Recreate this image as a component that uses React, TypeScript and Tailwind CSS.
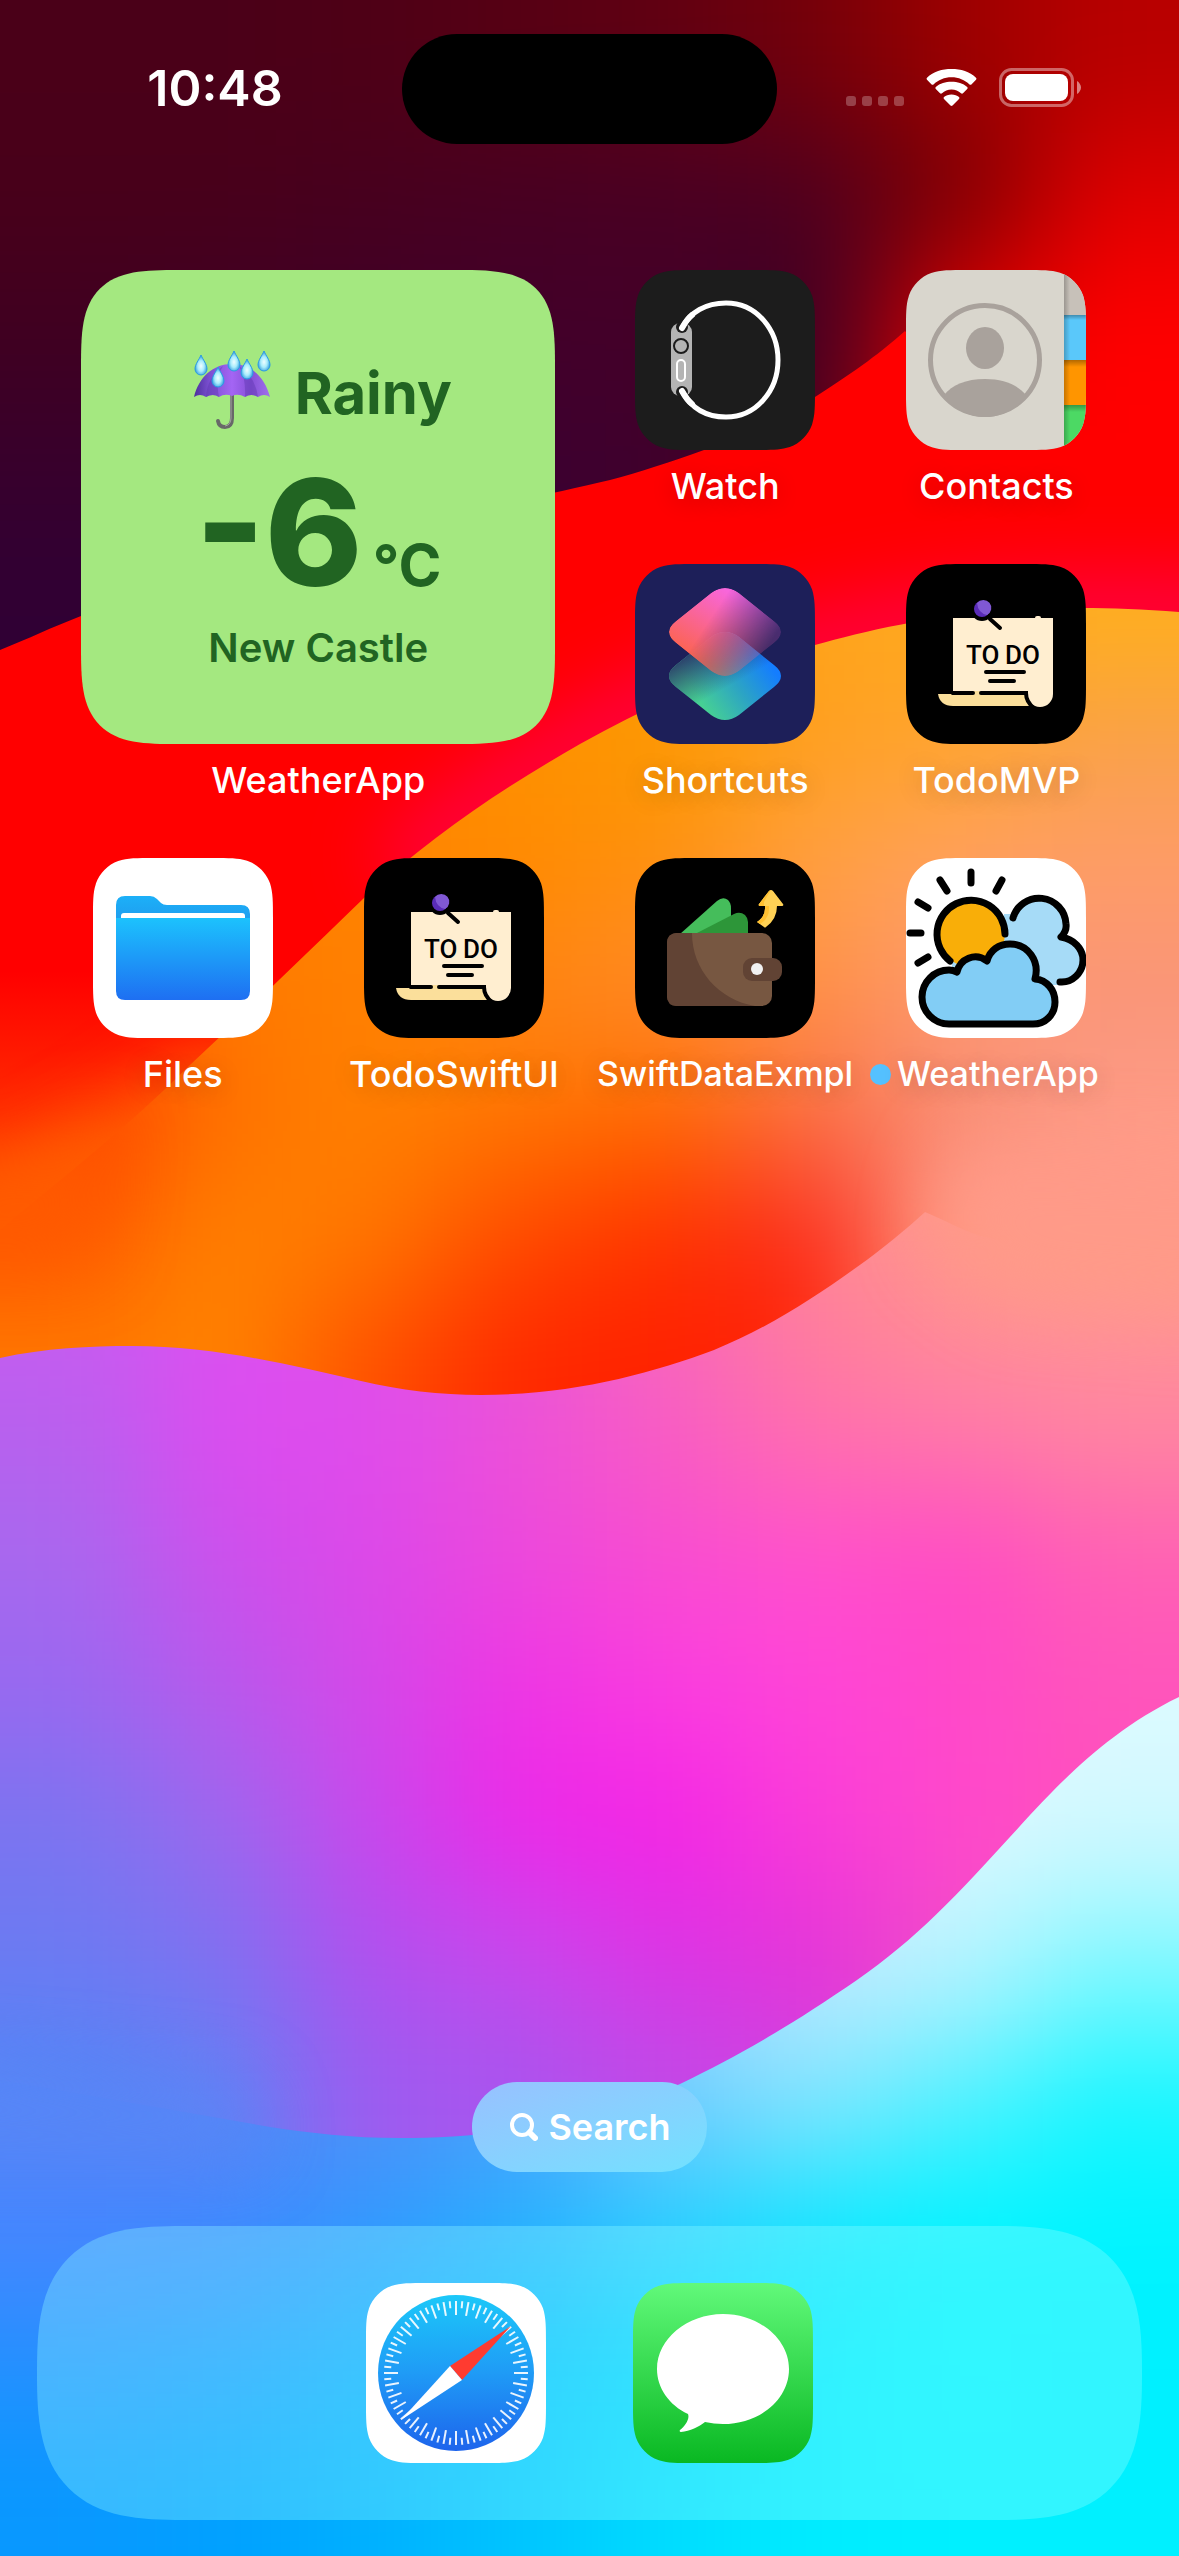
import React from "react";

/* ---------- shared geometry ---------- */

// Rounded square with continuous-curvature corners.
function squircle(w: number, h: number, r: number) {
  const a = 1.528665 * r;
  const b = 1.088493 * r;
  const c = 0.868407 * r;
  const d = 0.66993 * r;
  const e = 0.065496 * r;
  const f = 0.631494 * r;
  const g = 0.074911 * r;
  const i = 0.372824 * r;
  const j = 0.169059 * r;
  return [
    `M${a} 0H${w - a}`,
    `C${w - b} 0 ${w - c} 0 ${w - d} ${e}L${w - f} ${g}`,
    `C${w - i} ${j} ${w - j} ${i} ${w - g} ${f}`,
    `C${w} ${c} ${w} ${b} ${w} ${a}V${h - a}`,
    `C${w} ${h - b} ${w} ${h - c} ${w - e} ${h - d}L${w - g} ${h - f}`,
    `C${w - j} ${h - i} ${w - i} ${h - j} ${w - f} ${h - g}`,
    `C${w - c} ${h} ${w - b} ${h} ${w - a} ${h}H${a}`,
    `C${b} ${h} ${c} ${h} ${d} ${h - e}L${f} ${h - g}`,
    `C${i} ${h - j} ${j} ${h - i} ${g} ${h - f}`,
    `C0 ${h - c} 0 ${h - b} 0 ${h - a}V${a}`,
    `C0 ${b} 0 ${c} ${e} ${d}L${g} ${f}`,
    `C${j} ${i} ${i} ${j} ${f} ${g}`,
    `C${c} 0 ${b} 0 ${a} 0Z`,
  ].join("");
}

const TILE = squircle(180, 180, 40);

/* ---------- wallpaper ---------- */

const COLS = 8;
const COL_W = 1179 / COLS;

// Grid of colours melted together with a blur.
function Mesh({ top, step, rows }: { top: number; step: number; rows: string[] }) {
  const last = rows.length - 1;
  return (
    <g filter="url(#melt)">
      {rows.map((row, r) =>
        row.split(" ").map((color, c) => {
          const x0 = c === 0 ? -400 : c * COL_W;
          const x1 = c === COLS - 1 ? 1579 : (c + 1) * COL_W + 1;
          const y0 = r === 0 ? top - 300 : top + r * step;
          const y1 = r === last ? top + (r + 1) * step + 300 : top + (r + 1) * step + 1;
          return <rect key={`${r}-${c}`} x={x0} y={y0} width={x1 - x0} height={y1 - y0} fill={`#${color}`} />;
        })
      )}
    </g>
  );
}

const NIGHT = [
  "4a0018 4a0018 4e0016 560014 600012 74000a 9c0000 b80000",
  "48001a 48001a 47001e 470022 480024 4c0020 7c0004 e00000",
  "400020 400024 400028 42002a 440028 3c0024 dc0000 ff0000",
  "38002c 38002e 3a0030 3c0030 40002c 48001c ff0000 ff0000",
  "300034 300034 340034 380034 3c0030 48001c ff0000 ff0000",
];
const SUNSET = [
  "ff8000 ff8000 ff8800 ff9000 ff9a08 ffa31a ffaa1e ffae1e",
  "ff8000 ff8000 ff8800 ff9000 fb9800 ff9f20 ffa430 f8a04c",
  "ff7000 ff8000 ff8200 ff8a00 ff9010 ffa044 ffa060 ff9c68",
  "ff5000 ff7800 ff8000 ff8414 ff8828 ff9048 fc9870 f89478",
  "ff3c00 ff7000 ff8000 ff7600 ff6c00 fa7048 f88c76 ff9c88",
  "ff5c00 ff8000 ff7800 ff4a00 ff3200 fb2c20 ff9c84 ff9a88",
  "ff7800 ff8400 ff5000 ff2800 ff2000 ff2408 ff9484 ff9490",
];
const ORCHID = [
  "c85cf0 d850f0 dc50e8 e858d8 f868b8 ff8c90 ff9c86 ff9c8a",
  "c85cf0 dc50f0 dc50e8 e858d8 f868b8 ff8098 ff9290 ff9494",
  "b860ee dc4cf0 e04cec ec50d8 f85cc4 ff70ac ff7aa8 ff86a0",
  "a868ee cc50ec dc48e8 ec48dc f84cd0 ff50cc ff4ac4 ff60b4",
  "9868f0 b858ec d448e8 ee34e4 fa3ce0 ff44d8 ff48c8 ff54bc",
  "7c74f0 9c68ee c848ec ec28e8 f424e6 fa3cd8 ff48cc ff50bc",
  "6c7af2 8070f0 b050ee c848ec dc34e4 e434d8 f04cc8 ff50bc",
  "5484f6 6480f4 9c5cf0 a854ee c04ae8 d040e0 f04cc8 ff50bc",
];
const LAGOON = [
  "5884f6 5884f6 5090f8 60b0fc a0e0ff d0f0ff e4fbff dcfaff",
  "5884f6 5884f6 5090f8 60b0fc a0e0ff c8f0ff d8f8ff ccf8ff",
  "5884f6 5884f6 5090f8 60b0fc 90d8ff bce8ff b4f2ff 78f8ff",
  "5284f8 5884f6 4e90f8 48a0fc 70c8ff 80e4ff 50f0ff 18f6ff",
  "4686ff 4088ff 3298ff 28b0ff 2cccff 10e4ff 00f4ff 00f4ff",
  "2490ff 1c98ff 10a8ff 00bcff 00d4ff 00ecff 00f4ff 00f0ff",
  "0898ff 00a0ff 00b0ff 00c4ff 00dcff 00ecff 00f0ff 00f0ff",
];

const SUNSET_EDGE =
  "C60 1180 130 1125 190 1065C230 1028 310 950 364 898C434 834 500 790 580 744C660 700 730 668 815 645C890 624 1000 598 1179 612";

function Wallpaper() {
  return (
    <svg
      aria-hidden="true"
      className="absolute inset-0 h-full w-full"
      viewBox="0 0 1179 2556"
      preserveAspectRatio="none"
    >
      <defs>
        <filter id="melt" filterUnits="userSpaceOnUse" x="-400" y="-400" width="1979" height="3400" colorInterpolationFilters="sRGB">
          <feGaussianBlur stdDeviation="60" />
        </filter>
        <filter id="glow" filterUnits="userSpaceOnUse" x="-400" y="-400" width="1979" height="3400" colorInterpolationFilters="sRGB">
          <feGaussianBlur stdDeviation="36" />
        </filter>
        <linearGradient id="lava" x1="0" y1="0" x2="0" y2="1">
          <stop offset="0.38" stopColor="#ff0000" />
          <stop offset="0.44" stopColor="#ff3000" />
          <stop offset="0.5" stopColor="#ff6400" />
        </linearGradient>
        <clipPath id="nightClip">
          <path d="M0 0H1179V440H1000L905 331C880 353 860 368 815 397C780 419 750 434 704 450C670 462 640 472 610 480C560 492 480 508 430 520C300 550 150 590 81 616C50 628 30 638 0 650Z" />
        </clipPath>
        <clipPath id="sunsetClip">
          <path d={`M0 1230${SUNSET_EDGE}V1500H0Z`} />
        </clipPath>
        <clipPath id="orchidClip">
          <path d="M0 1358C45 1348 90 1346 132 1346C215 1346 290 1365 361 1381C400 1390 440 1395 481 1395C570 1395 650 1374 714 1350C770 1327 815 1297 857 1267C885 1247 905 1230 925 1212C950 1222 970 1236 1000 1240H1179V2200H0Z" />
        </clipPath>
        <clipPath id="lagoonClip">
          <path d="M1179 1697C1110 1730 1060 1783 1030 1815C960 1892 920 1936 857 1980C790 2026 740 2055 680 2084C580 2128 480 2138 400 2138C350 2138 310 2133 270 2127L0 2080V2556H1179Z" />
        </clipPath>
      </defs>
      <rect width="1179" height="2556" fill="url(#lava)" />
      <path
        d="M400 885C434 854 500 800 580 754C660 710 730 678 815 655C890 634 1000 608 1250 622"
        fill="none"
        stroke="#ff003c"
        strokeWidth="90"
        filter="url(#glow)"
      />
      <path d="M-200 1340L60 1150L180 1070L240 1030V1340Z" fill="#ff6400" filter="url(#glow)" />
      <g clipPath="url(#nightClip)">
        <Mesh top={0} step={132} rows={NIGHT} />
      </g>
      <g clipPath="url(#sunsetClip)">
        <Mesh top={560} step={123} rows={SUNSET} />
      </g>
      <path d="M-120 1170L40 1160L110 1110L90 1260H-120Z" fill="#ff5a00" filter="url(#glow)" />
      <g clipPath="url(#orchidClip)">
        <Mesh top={1100} step={131} rows={ORCHID} />
      </g>
      <path d="M960 1150L1300 1160V1320L1010 1300L930 1240Z" fill="#ff9a88" filter="url(#glow)" />
      <g clipPath="url(#lagoonClip)">
        <Mesh top={1650} step={130} rows={LAGOON} />
      </g>
      <path d="M-100 2060L240 2090L260 2150L-100 2150Z" fill="#5886f6" filter="url(#glow)" />
    </svg>
  );
}

/* ---------- icons ---------- */

function Tile({ id, children }: { id: string; children: React.ReactNode }) {
  return (
    <svg aria-hidden="true" className="size-[180px] shrink-0" viewBox="0 0 180 180">
      <clipPath id={`${id}-tile`}>
        <path d={TILE} />
      </clipPath>
      <g clipPath={`url(#${id}-tile)`}>{children}</g>
    </svg>
  );
}

function WatchIcon() {
  return (
    <Tile id="watch">
      <rect width="180" height="180" fill="#1c1c1c" />
      <rect x="36" y="53" width="21" height="73" rx="9" fill="#b4b4b4" />
      <circle cx="47" cy="57" r="6" fill="#1c1c1c" />
      <circle cx="47" cy="122" r="6" fill="#1c1c1c" />
      <path
        d="M47 58C55 42 71 33 91 33C121 33 143 59 143 90C143 121 121 147 91 147C71 147 56 138 47 121"
        fill="none"
        stroke="#fff"
        strokeWidth="5"
        strokeLinecap="round"
      />
      <path d="M47 58Q52 49 57 45M47 121Q52 130 57 134" fill="none" stroke="#fff" strokeWidth="6" strokeLinecap="round" />
      <circle cx="46" cy="76" r="7" fill="#b4b4b4" stroke="#1c1c1c" strokeWidth="2" />
      <rect x="42" y="90" width="8" height="21" rx="4" fill="none" stroke="#fff" strokeWidth="2" />
    </Tile>
  );
}

function ContactsIcon() {
  return (
    <Tile id="contacts">
      <defs>
        <linearGradient id="tab-shade" x1="0" y1="0" x2="0" y2="1">
          <stop offset="0" stopColor="#000" stopOpacity="0.3" />
          <stop offset="1" stopColor="#000" stopOpacity="0" />
        </linearGradient>
        <linearGradient id="tab-side" x1="0" y1="0" x2="1" y2="0">
          <stop offset="0" stopColor="#000" stopOpacity="0.22" />
          <stop offset="1" stopColor="#000" stopOpacity="0" />
        </linearGradient>
      </defs>
      <rect width="180" height="180" fill="#d9d6cd" />
      <rect x="158" width="22" height="45" fill="#c7c1b9" />
      <rect x="158" y="45" width="22" height="45" fill="#5ac8fa" />
      <rect x="158" y="90" width="22" height="45" fill="#ff9500" />
      <rect x="158" y="135" width="22" height="45" fill="#4cd964" />
      <rect x="158" y="45" width="22" height="5" fill="url(#tab-shade)" />
      <rect x="158" y="90" width="22" height="7" fill="url(#tab-shade)" />
      <rect x="158" y="135" width="22" height="7" fill="url(#tab-shade)" />
      <rect x="158" width="6" height="180" fill="url(#tab-side)" />
      <circle cx="79" cy="90" r="54.5" fill="none" stroke="#a9a29c" strokeWidth="5" />
      <ellipse cx="79" cy="78" rx="19" ry="21" fill="#a9a29c" />
      <path d="M38 125C46 115 60 109 79 109C98 109 112 115 120 125C110 139 96 147 79 147C62 147 48 139 38 125Z" fill="#a9a29c" />
    </Tile>
  );
}

function ShortcutsIcon() {
  const top = "M76 29Q90 19 104 29L139 57Q153 68 139 79L104 107Q90 117 76 107L41 79Q27 68 41 57Z";
  const bottom = "M76 73Q90 63 104 73L139 101Q153 112 139 123L104 151Q90 161 76 151L41 123Q27 112 41 101Z";
  return (
    <Tile id="shortcuts">
      <defs>
        <linearGradient id="sc-low" gradientUnits="userSpaceOnUse" x1="70" y1="145" x2="135" y2="100">
          <stop offset="0" stopColor="#46d094" />
          <stop offset="0.5" stopColor="#2ca4c4" />
          <stop offset="1" stopColor="#147dff" />
        </linearGradient>
        <linearGradient id="sc-low-fade" gradientUnits="userSpaceOnUse" x1="56" y1="86" x2="80" y2="130">
          <stop offset="0" stopColor="#2a3868" />
          <stop offset="1" stopColor="#2a3868" stopOpacity="0" />
        </linearGradient>
        <linearGradient id="sc-top" gradientUnits="userSpaceOnUse" x1="60" y1="92" x2="98" y2="30">
          <stop offset="0" stopColor="#fb6456" />
          <stop offset="1" stopColor="#f866dc" />
        </linearGradient>
        <linearGradient id="sc-top-mask" gradientUnits="userSpaceOnUse" x1="75" y1="55" x2="128" y2="90">
          <stop offset="0" stopColor="#fff" />
          <stop offset="1" stopColor="#fff" stopOpacity="0.2" />
        </linearGradient>
        <mask id="sc-mask">
          <path d={top} fill="url(#sc-top-mask)" />
        </mask>
      </defs>
      <rect width="180" height="180" fill="#1d1f59" />
      <path d={bottom} fill="url(#sc-low)" />
      <path d={bottom} fill="url(#sc-low-fade)" />
      <path d={top} fill="url(#sc-top)" mask="url(#sc-mask)" />
    </Tile>
  );
}

function TodoIcon({ id }: { id: string }) {
  return (
    <Tile id={id}>
      <rect width="180" height="180" fill="#000" />
      <path d="M32 130H121L126 142H47Q34 142 32 130Z" fill="#fbdf9b" />
      <path d="M47 54H147V130A13 13 0 0 1 121 130H47Z" fill="#ffeed0" />
      <path d="M47 129H68M74 129H120Q120 138 128 144" fill="none" stroke="#000" strokeWidth="4" strokeLinecap="round" />
      <rect x="67" y="127" width="8" height="4" fill="#fbdf9b" />
      <path d="M47 129H67M75 129H119" stroke="#000" strokeWidth="4" strokeLinecap="round" />
      <rect x="129" y="52" width="6" height="4" rx="2" fill="#ffeed0" />
      <circle cx="76" cy="46" r="11" fill="#000" />
      <path d="M84 55L94 64" stroke="#000" strokeWidth="4" strokeLinecap="round" />
      <circle cx="76" cy="45" r="8" fill="#5a2cb8" />
      <path d="M71 39A8 8 0 1 1 81 51Q72 49 71 39Z" fill="#8058d4" />
      <g fontFamily="Roboto, sans-serif" fontSize="26" fontWeight="500" fill="#000">
        <text x="60" y="100">TO</text>
        <text x="99" y="100">DO</text>
      </g>
      <path d="M80 108H118M84 117H108" stroke="#000" strokeWidth="4" strokeLinecap="round" />
    </Tile>
  );
}

function FilesIcon() {
  return (
    <Tile id="files">
      <defs>
        <linearGradient id="folder" x1="0" y1="0" x2="0" y2="1">
          <stop offset="0" stopColor="#1cc2fd" />
          <stop offset="1" stopColor="#1e6ff2" />
        </linearGradient>
        <linearGradient id="folder-back" x1="0" y1="0" x2="0" y2="1">
          <stop offset="0" stopColor="#1cb0f8" />
          <stop offset="1" stopColor="#2098ec" />
        </linearGradient>
      </defs>
      <rect width="180" height="180" fill="#fff" />
      <path d="M23 47Q23 38 32 38H57Q61 38 64 41L68 45Q70 47 74 47H148Q157 47 157 56V70H23Z" fill="url(#folder-back)" />
      <path d="M28 61V58Q28 55 31 55H149Q152 55 152 58V61Z" fill="#fff" />
      <path d="M23 60H157V133Q157 142 148 142H32Q23 142 23 133Z" fill="url(#folder)" />
    </Tile>
  );
}

function WalletIcon() {
  return (
    <Tile id="wallet">
      <rect width="180" height="180" fill="#000" />
      <path d="M45 76L82 43Q88 38 93 42Q96 45 96 50V76Z" fill="#45bd5b" />
      <path d="M60 76L99 56Q105 53 110 57Q113 60 113 64V76Z" fill="#2d9639" />
      <rect x="32" y="75" width="105" height="73" rx="10" fill="#775741" />
      <path d="M57 75H42Q32 75 32 85V138Q32 148 42 148H120C84 142 57 112 57 75Z" fill="#614334" />
      <rect x="108" y="100" width="39" height="23" rx="9" fill="#614334" />
      <circle cx="122" cy="111" r="6" fill="#f1f1f1" />
      <path d="M134 33Q136 31 138 33L148 46Q149 48 147 48H142Q142 61 131 69Q130 70 129 69L122 64Q131 58 130 48H125Q123 48 124 46Z" fill="#ffd155" />
      <path d="M134 33L136 32Q131 40 129 44V48H125Q123 48 124 46Z" fill="#ffc031" />
      <path d="M130 48H134Q135 60 125 66L122 64Q131 58 130 48Z" fill="#ffc031" />
    </Tile>
  );
}

function WeatherIcon() {
  return (
    <Tile id="weather">
      <rect width="180" height="180" fill="#fff" />
      <path d="M98 56H107C112 47 121 43 131 43C150 43 162 59 159 78C170 82 178 90 178 102C178 115 167 127 153 127H129L46 110V104H98Z" fill="#a6dbf7" />
      <circle cx="65" cy="75" r="34" fill="#f9ae08" />
      <g fill="none" stroke="#000" strokeWidth="7" strokeLinecap="round" strokeLinejoin="round">
        <path d="M99 76A34 34 0 1 0 44 103" />
        <path d="M107 60A27 27 0 0 1 160 66Q161 73 155 79C168 81 177 91 177 102C177 115 166 125 154 124" />
        <path d="M65 14V25M34 22L41 33M96 22L90 33M12 44L22 50M4 75H15M12 105L22 99" />
        <path
          d="M43 166A27 27 0 0 1 43 112Q47 112 51 114C54 101 69 94 81 103C84 92 93 86 104 86C122 86 134 103 129 121C141 122 149 132 149 144C149 157 139 166 127 166Z"
          fill="#82cdf5"
        />
      </g>
    </Tile>
  );
}

function SafariIcon() {
  const ticks = Array.from({ length: 72 }, (_, n) => n);
  return (
    <Tile id="safari">
      <defs>
        <linearGradient id="compass" x1="0" y1="0" x2="0" y2="1">
          <stop offset="0" stopColor="#1cc8f9" />
          <stop offset="0.5" stopColor="#1f9bf6" />
          <stop offset="1" stopColor="#1d64ec" />
        </linearGradient>
      </defs>
      <rect width="180" height="180" fill="#fff" />
      <circle cx="90" cy="90" r="78" fill="url(#compass)" />
      <g stroke="#fff" strokeWidth="2" strokeOpacity="0.9">
        {ticks.map((n) => (
          <line key={n} x1="90" x2="90" y1="18" y2={n % 2 === 0 ? 32 : 25} transform={`rotate(${n * 5} 90 90)`} />
        ))}
      </g>
      <path d="M145 43L84 83L96 97Z" fill="#ff3b30" />
      <path d="M35 137L84 83L96 97Z" fill="#fff" />
    </Tile>
  );
}

function MessagesIcon() {
  return (
    <Tile id="messages">
      <defs>
        <linearGradient id="msg" x1="0" y1="0" x2="0" y2="1">
          <stop offset="0" stopColor="#61f97a" />
          <stop offset="1" stopColor="#09b822" />
        </linearGradient>
      </defs>
      <rect width="180" height="180" fill="url(#msg)" />
      <path
        d="M90 31C126 31 156 56 156 86C156 117 126 141 90 141Q81 141 72 139C66 144 57 148 48 149Q46 149 47 147C52 143 57 136 55 131C36 122 24 105 24 86C24 56 54 31 90 31Z"
        fill="#fff"
      />
    </Tile>
  );
}

const DROPS = [
  [8, 16],
  [41, 12],
  [25, 28],
  [54, 20],
  [71, 12],
];

function UmbrellaIcon() {
  return (
    <svg aria-hidden="true" className="h-20 w-[78px] shrink-0" viewBox="0 0 78 80">
      <defs>
        <linearGradient id="canopy" x1="0" y1="0" x2="1" y2="0">
          <stop offset="0" stopColor="#4c2f9c" />
          <stop offset="0.2" stopColor="#7a4fd0" />
          <stop offset="0.5" stopColor="#a465f4" />
          <stop offset="0.75" stopColor="#8550d6" />
          <stop offset="1" stopColor="#a070ec" />
        </linearGradient>
        <radialGradient id="drop" cx="0.5" cy="0.55" r="0.6">
          <stop offset="0" stopColor="#f0fdff" />
          <stop offset="0.45" stopColor="#a8ecfc" />
          <stop offset="1" stopColor="#1384d6" />
        </radialGradient>
      </defs>
      <path d="M39 44V68Q39 77 32 77Q26 77 25 71" fill="none" stroke="#686868" strokeWidth="4" strokeLinecap="round" />
      <path d="M38 44V68Q38 75 32 76" fill="none" stroke="#a4a4a4" strokeWidth="1" />
      <path d="M1 47C6 27 20 14 39 14C58 14 72 27 77 47Q71 43 65 47Q58 43 52 47Q45 43 39 46Q32 43 26 47Q20 43 13 47Q7 43 1 47Z" fill="url(#canopy)" />
      <path d="M13 47Q14 28 30 16Q22 28 26 47Q20 43 13 47ZM52 47Q53 28 46 16Q62 26 65 47Q58 43 52 47Z" fill="#5a34ac" fillOpacity="0.4" />
      {DROPS.map(([x, y]) => (
        <path
          key={`${x}-${y}`}
          d="M0 -11C2 -6 6 -2 6 3A6 6 0 0 1 -6 3C-6 -2 -2 -6 0 -11Z"
          transform={`translate(${x} ${y})`}
          fill="url(#drop)"
          stroke="#2a9be4"
          strokeWidth="1"
        />
      ))}
    </svg>
  );
}

/* ---------- status bar ---------- */

function StatusBar() {
  return (
    <header className="relative grid grid-cols-[1fr_375px_1fr] items-start pt-[34px] text-white">
      <time className="justify-self-center pt-6 pl-7 text-[50px] leading-[60px] font-semibold">10:48</time>
      <div className="h-[110px] rounded-full bg-black" />
      <div className="flex items-center gap-[22px] justify-self-end pt-[34px] pr-[98px]">
        <div role="img" aria-label="No signal" className="flex gap-1.5 self-end pb-px">
          <span className="size-2.5 rounded-[3px] bg-white/25" />
          <span className="size-2.5 rounded-[3px] bg-white/25" />
          <span className="size-2.5 rounded-[3px] bg-white/25" />
          <span className="size-2.5 rounded-[3px] bg-white/25" />
        </div>
        <svg role="img" aria-label="Wi-Fi" className="h-[38px] w-[51px]" viewBox="0 0 51 38" fill="#fff">
          <path d="M25.500 8.200C32.500 8.200 38.800 10.900 43.500 15.400Q44.500 16.300 45.400 15.400L50 10.700Q51 9.700 50 8.700C43.600 2.500 34.900 0 25.500 0C16.100 0 7.400 2.500 1 8.700Q0 9.700 1 10.700L5.600 15.400Q6.500 16.300 7.500 15.400C12.200 10.900 18.500 8.200 25.500 8.200Z" />
          <path d="M25.500 20.500C29.200 20.500 32.500 21.900 35 24.200Q36 25.100 37 24.200L41.200 20Q42.200 19 41.200 18C37 14.200 31.500 12.700 25.500 12.700C19.500 12.700 14 14.200 9.800 18Q8.800 19 9.800 20L14 24.200Q15 25.100 16 24.200C18.500 21.900 21.800 20.500 25.500 20.500Z" />
          <path d="M25.500 25.500C22.500 25.500 19.800 26.400 18 28Q17 29 18 30L24.500 36.600Q25.500 37.500 26.500 36.600L33 30Q34 29 33 28C31.200 26.400 28.500 25.500 25.500 25.500Z" />
        </svg>
        <svg role="img" aria-label="Battery full" className="h-[39px] w-[82px]" viewBox="0 0 82 39">
          <rect x="1.500" y="1.500" width="72" height="36" rx="11" fill="none" stroke="#fff" strokeOpacity="0.4" strokeWidth="3" />
          <rect x="6" y="6" width="63" height="27" rx="8" fill="#fff" />
          <path d="M78 13C80 14 82 17 82 19.500C82 22 80 25 78 26Z" fill="#fff" fillOpacity="0.5" />
        </svg>
      </div>
    </header>
  );
}

/* ---------- home screen ---------- */

const APPS = [
  { name: "Watch", icon: <WatchIcon /> },
  { name: "Contacts", icon: <ContactsIcon /> },
  { name: "Shortcuts", icon: <ShortcutsIcon /> },
  { name: "TodoMVP", icon: <TodoIcon id="todo-mvp" /> },
  { name: "Files", icon: <FilesIcon /> },
  { name: "TodoSwiftUI", icon: <TodoIcon id="todo-swiftui" /> },
  { name: "SwiftDataExmpl", icon: <WalletIcon />, compact: true },
  { name: "WeatherApp", icon: <WeatherIcon />, compact: true, fresh: true },
];

function WeatherWidget() {
  return (
    <button type="button" className="col-span-2 row-span-2 flex flex-col items-center gap-3.5">
      <span className="flex h-[474px] w-[474px] flex-col items-center rounded-[66px] bg-[#a4e880] pt-20 text-[#216422] supports-[corner-shape:squircle]:rounded-[98px] supports-[corner-shape:squircle]:[corner-shape:superellipse(1.7)]">
        <span className="flex items-start gap-6 pl-2">
          <UmbrellaIcon />
          <span className="pt-2 text-[58px] leading-[70px] font-bold">Rainy</span>
        </span>
        <span className="mt-5 flex items-baseline gap-2.5">
          <span className="text-[148px] leading-[166px] font-extrabold">-6</span>
          <span className="text-[58px] leading-[70px] font-bold">°C</span>
        </span>
        <span className="mt-2 text-[40px] leading-[48px] font-semibold">New Castle</span>
      </span>
      <span className="text-[36px] leading-[44px] font-medium text-white">WeatherApp</span>
    </button>
  );
}

export default function App() {
  return (
    <main className="relative flex min-h-screen flex-col overflow-hidden bg-red-600 font-['Inter',sans-serif]">
      <Wallpaper />
      <StatusBar />

      <section aria-label="Apps" className="relative mt-[126px] grid auto-rows-[294px] grid-cols-4 px-[47px]">
        <WeatherWidget />
        {APPS.map((app) => (
          <button key={app.name} type="button" className="flex flex-col items-center gap-3.5">
            {app.icon}
            <span
              className={`flex items-center gap-1.5 leading-[44px] font-medium whitespace-nowrap text-white [text-shadow:0_4px_24px_rgba(0,0,0,0.2)] ${
                app.compact ? "text-[34px]" : "text-[36px]"
              } ${app.fresh ? "pr-6" : ""}`}
            >
              {app.fresh && <span className="size-[21px] rounded-full bg-[#55c1ff]" />}
              {app.name}
            </span>
          </button>
        ))}
      </section>

      <div className="relative mt-auto flex flex-col items-center px-[37px] pb-9">
        <button
          type="button"
          className="flex h-[90px] items-center gap-2.5 rounded-full bg-linear-to-br from-[#98c0ff] to-[#6fe2ff] pr-9 pl-[38px] text-[36px] leading-[44px] font-semibold text-white"
        >
          <svg aria-hidden="true" className="size-7" viewBox="0 0 28 28" fill="none" stroke="#fff" strokeLinecap="round">
            <circle cx="12" cy="12" r="10" strokeWidth="4" />
            <path d="M19.500 19.500L25 25" strokeWidth="6" />
          </svg>
          Search
        </button>
        <nav
          aria-label="Dock"
          className="mt-[54px] flex w-full justify-center gap-[87px] rounded-[110px] bg-[rgba(150,255,255,0.33)] py-[57px] supports-[corner-shape:squircle]:rounded-[146px] supports-[corner-shape:squircle]:[corner-shape:superellipse(1.5)]"
        >
          <button type="button" aria-label="Safari">
            <SafariIcon />
          </button>
          <button type="button" aria-label="Messages">
            <MessagesIcon />
          </button>
        </nav>
      </div>
    </main>
  );
}
